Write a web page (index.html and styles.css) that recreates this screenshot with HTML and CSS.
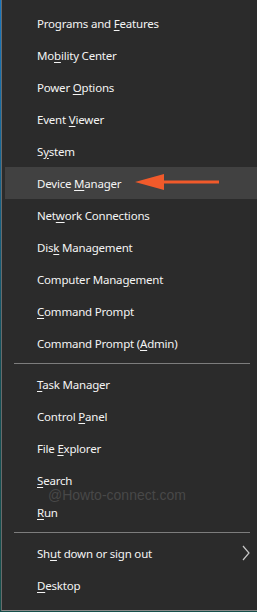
FILE: index.html
```html
<!DOCTYPE html>
<html lang="en">
<head>
  <meta charset="UTF-8" />
  <title>Quick Link Menu</title>
  <link rel="stylesheet" href="styles.css">
</head>
<body>
  <div class="menu">
    <div class="group">
      <div class="item"><span class="label">Programs and <u>F</u>eatures</span></div>
      <div class="item"><span class="label">Mo<u>b</u>ility Center</span></div>
      <div class="item"><span class="label">Power <u>O</u>ptions</span></div>
      <div class="item"><span class="label">Event <u>V</u>iewer</span></div>
      <div class="item"><span class="label">S<u>y</u>stem</span></div>
      <div class="item active">
        <span class="label">Device <u>M</u>anager</span>
        <svg class="pointer" width="88" height="18" viewBox="0 0 88 18">
          <polygon points="0,9 29,1 29,17" fill="#f15a2b" />
          <rect x="26" y="7.5" width="58" height="3" fill="#f15a2b" />
        </svg>
      </div>
      <div class="item"><span class="label">Net<u>w</u>ork Connections</span></div>
      <div class="item"><span class="label">Dis<u>k</u> Management</span></div>
      <div class="item"><span class="label">Computer Mana<u>g</u>ement</span></div>
      <div class="item"><span class="label"><u>C</u>ommand Prompt</span></div>
      <div class="item"><span class="label">Command Prompt (<u>A</u>dmin)</span></div>
    </div>
    <hr class="sep" />
    <div class="group">
      <div class="item"><span class="label"><u>T</u>ask Manager</span></div>
      <div class="item"><span class="label">Control <u>P</u>anel</span></div>
      <div class="item"><span class="label">File <u>E</u>xplorer</span></div>
      <div class="item"><span class="label"><u>S</u>earch</span></div>
      <div class="item">
        <span class="label"><u>R</u>un</span>
        <span class="watermark">@Howto-connect.com</span>
      </div>
    </div>
    <hr class="sep" />
    <div class="group">
      <div class="item">
        <span class="label">Sh<u>u</u>t down or sign out</span>
        <svg class="chevron" width="8" height="16" viewBox="0 0 8 16">
          <polyline points="1,1 7,8 1,15" fill="none" stroke="#c8c8c8" stroke-width="1.2" />
        </svg>
      </div>
      <div class="item"><span class="label"><u>D</u>esktop</span></div>
    </div>
  </div>
</body>
</html>
```

FILE: styles.css
```css
* {
  margin: 0;
  padding: 0;
  box-sizing: border-box;
}

body {
  width: 257px;
  height: 612px;
  background: linear-gradient(#1877c0, #135058 60%, #16504c);
  font-family: 'Noto Sans', 'Open Sans', sans-serif;
  overflow: hidden;
}

.menu {
  margin-left: 1px;
  width: 256px;
  height: 611px;
  background-color: #2b2b2b;
  border-left: 1px solid #6a6a6a;
  border-bottom: 1px solid #8a8a8a;
  padding: 7px 0 8px 3px;
}

.item {
  position: relative;
  height: 32px;
  display: flex;
  align-items: center;
  padding-left: 32px;
  color: #f4f4f4;
  font-size: 11.5px;
  letter-spacing: -0.2px;
}

.label {
  white-space: nowrap;
}

.item u {
  text-underline-offset: 2px;
}

.item.active {
  background-color: #414141;
}

.sep {
  border: none;
  border-top: 1px solid #7d7d7d;
  margin: 4px 7px 4px 9px;
  height: 0;
}

.pointer {
  position: absolute;
  left: 130px;
  top: 6px;
}

.chevron {
  position: absolute;
  right: 7px;
  top: 8px;
}

.watermark {
  position: absolute;
  left: 43px;
  top: -9px;
  font-family: 'Liberation Sans', Arial, sans-serif;
  font-size: 14px;
  letter-spacing: 0;
  color: #484848;
}
```
